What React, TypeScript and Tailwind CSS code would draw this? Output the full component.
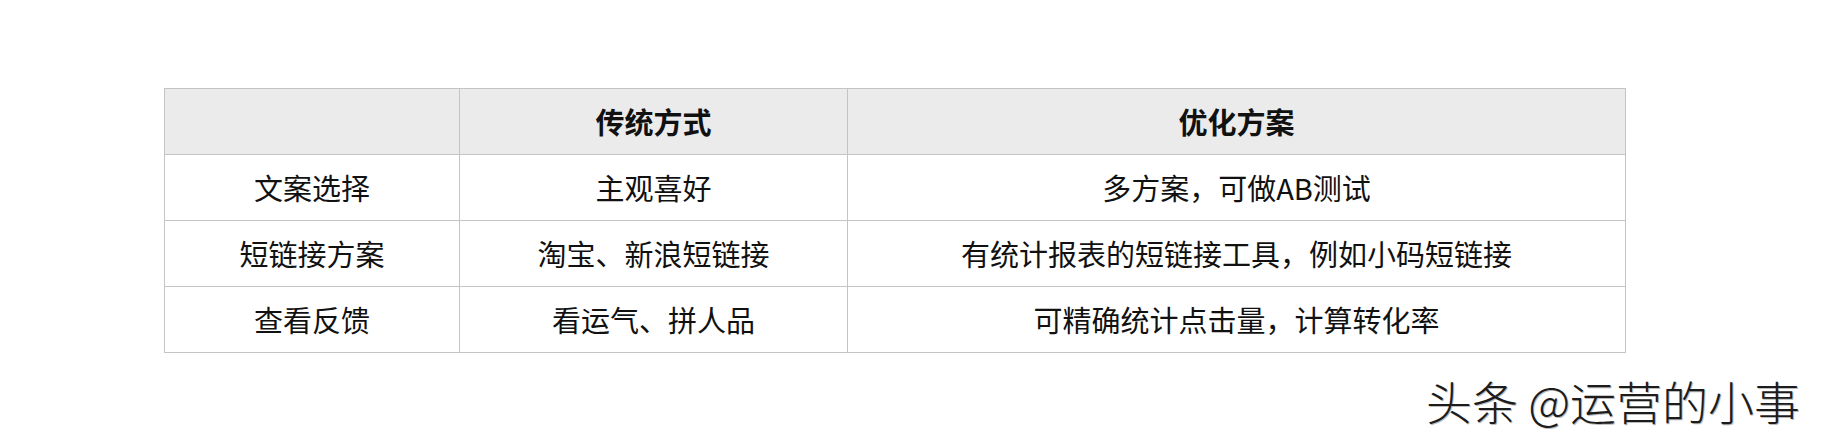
const rows = [
  ["文案选择", "主观喜好", "多方案，可做AB测试"],
  ["短链接方案", "淘宝、新浪短链接", "有统计报表的短链接工具，例如小码短链接"],
  ["查看反馈", "看运气、拼人品", "可精确统计点击量，计算转化率"],
];

const font = { fontFamily: '"Noto Sans CJK SC", "Noto Sans", sans-serif' };

export default function App() {
  return (
    <main
      className="h-[442px] w-[1824px] overflow-hidden bg-white text-[#111]"
      style={font}
    >
      <div className="pl-[164px] pt-[88px]">
        <div className="grid w-[1462px] grid-cols-[294px_388px_1fr] border border-[#c4c4c4] text-[29px] leading-none">
          <div className="h-[65px] bg-[#ebebeb]" />
          <div className="flex h-[65px] items-center justify-center border-l border-[#c4c4c4] bg-[#ebebeb] font-bold">
            传统方式
          </div>
          <div className="flex h-[65px] items-center justify-center border-l border-[#c4c4c4] bg-[#ebebeb] font-bold">
            优化方案
          </div>
          {rows.map((row, i) => (
            <div key={i} className="contents">
              {row.map((cell, j) => (
                <div
                  key={j}
                  className={`flex h-[66px] items-center justify-center border-t border-[#c4c4c4] ${
                    j > 0 ? "border-l" : ""
                  }`}
                >
                  {cell}
                </div>
              ))}
            </div>
          ))}
        </div>
      </div>

      <div className="mt-[24px] flex justify-end pr-[24px]">
        <p className="text-[46px] font-light leading-none text-[#1c1c1c] [text-shadow:1px_1px_0_#bbb]">
          头条 @运营的小事
        </p>
      </div>
    </main>
  );
}
